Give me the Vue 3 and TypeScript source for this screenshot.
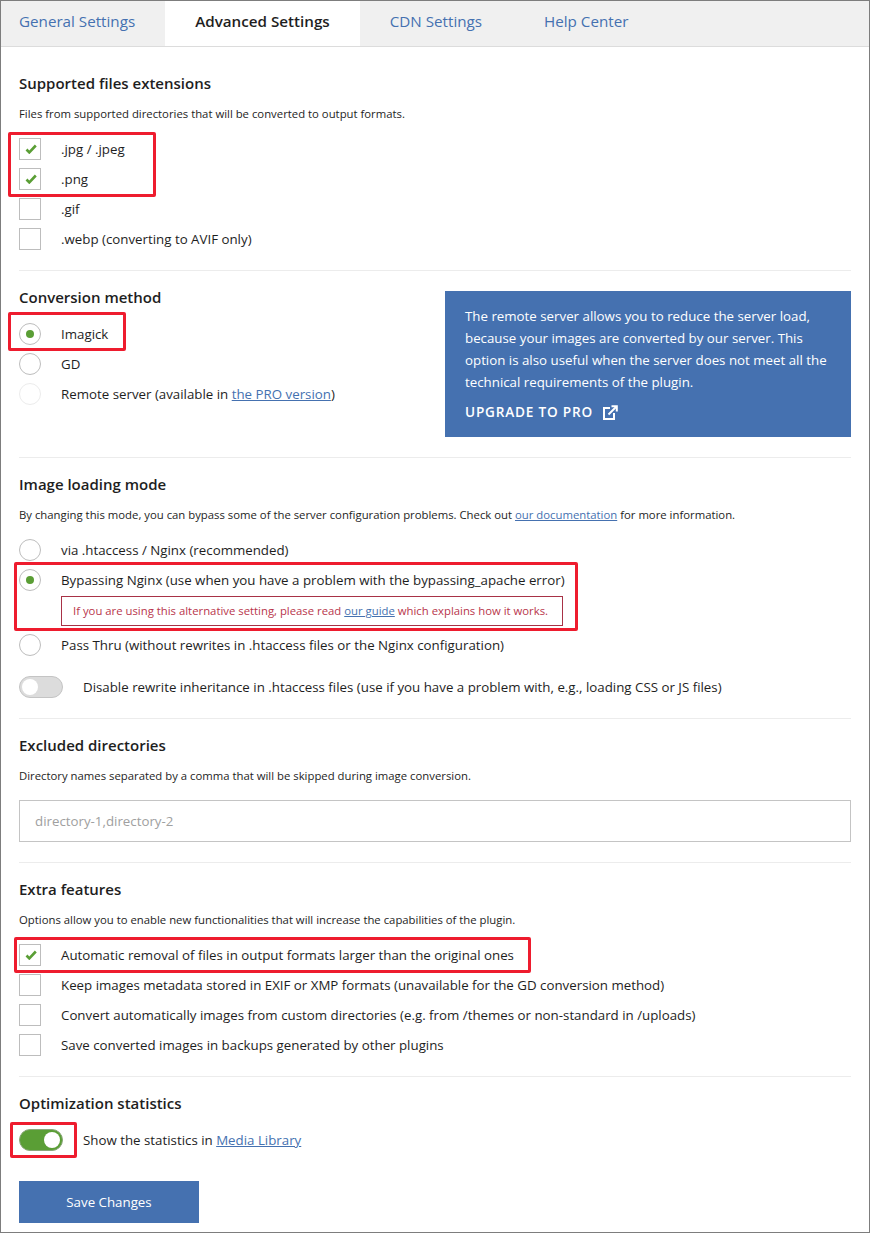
<script setup lang="ts">
const tabs = [
  { label: 'General Settings', active: false },
  { label: 'Advanced Settings', active: true },
  { label: 'CDN Settings', active: false },
  { label: 'Help Center', active: false },
]
const marks = [
  { x: 8, y: 132, w: 148, h: 65 },
  { x: 8, y: 312, w: 118, h: 39 },
  { x: 14, y: 562, w: 564, h: 69 },
  { x: 14, y: 937, w: 517, h: 36 },
  { x: 10, y: 1122, w: 67, h: 36 },
]
const px = (m: { x: number; y: number; w: number; h: number }) => ({
  left: m.x + 'px',
  top: m.y + 'px',
  width: m.w + 'px',
  height: m.h + 'px',
})
const extras = [
  { label: 'Automatic removal of files in output formats larger than the original ones', on: true },
  { label: 'Keep images metadata stored in EXIF or XMP formats (unavailable for the GD conversion method)', on: false },
  { label: 'Convert automatically images from custom directories (e.g. from /themes or non-standard in /uploads)', on: false },
  { label: 'Save converted images in backups generated by other plugins', on: false },
]
const exts = [
  { label: '.jpg / .jpeg', on: true },
  { label: '.png', on: true },
  { label: '.gif', on: false },
  { label: '.webp (converting to AVIF only)', on: false },
]
</script>

<template>
  <div class="page">
    <nav class="tabs">
      <a v-for="t in tabs" :key="t.label" class="tab" :class="{ active: t.active }">{{ t.label }}</a>
    </nav>

    <section class="sec first">
      <h3>Supported files extensions</h3>
      <p class="desc">Files from supported directories that will be converted to output formats.</p>
      <div class="rows">
        <div v-for="e in exts" :key="e.label" class="row">
          <span class="box">
            <svg v-if="e.on" width="12" height="10" viewBox="0 0 12 10"><path d="M1.5 5.5 4.3 8.4 10.8 1.5" fill="none" stroke="#5a9e35" stroke-width="2.6" /></svg>
          </span>
          <span>{{ e.label }}</span>
        </div>
      </div>
    </section>

    <section class="sec method">
      <div class="method-left">
        <h3>Conversion method</h3>
        <div class="rows">
          <div class="row"><span class="radio on"></span><span>Imagick</span></div>
          <div class="row"><span class="radio"></span><span>GD</span></div>
          <div class="row"><span class="radio off"></span><span>Remote server (available in <a class="lnk">the PRO version</a>)</span></div>
        </div>
      </div>
      <aside class="promo">
        <p>The remote server allows you to reduce the server load, because your images are converted by our server. This option is also useful when the server does not meet all the technical requirements of the plugin.</p>
        <a class="upgrade">UPGRADE TO PRO
          <svg width="16" height="15" viewBox="0 0 16 15" fill="none" stroke="#fff" stroke-width="2"><path d="M8 3H2v11h10V8" /><path d="M6.5 9.5 14 2" /><path d="M9.5 1.2h5.3v5.3" /></svg>
        </a>
      </aside>
    </section>

    <section class="sec">
      <h3>Image loading mode</h3>
      <p class="desc">By changing this mode, you can bypass some of the server configuration problems. Check out <a class="lnk">our documentation</a> for more information.</p>
      <div class="rows">
        <div class="row"><span class="radio"></span><span>via .htaccess / Nginx (recommended)</span></div>
        <div class="row"><span class="radio on"></span><span>Bypassing Nginx (use when you have a problem with the bypassing_apache error)</span></div>
      </div>
      <div class="warn">If you are using this alternative setting, please read <a class="lnk">our guide</a> which explains how it works.</div>
      <div class="row pass"><span class="radio"></span><span>Pass Thru (without rewrites in .htaccess files or the Nginx configuration)</span></div>
      <div class="row toggle-row">
        <span class="toggle"><i></i></span>
        <span>Disable rewrite inheritance in .htaccess files (use if you have a problem with, e.g., loading CSS or JS files)</span>
      </div>
    </section>

    <section class="sec">
      <h3>Excluded directories</h3>
      <p class="desc">Directory names separated by a comma that will be skipped during image conversion.</p>
      <div class="input">directory-1,directory-2</div>
    </section>

    <section class="sec">
      <h3>Extra features</h3>
      <p class="desc">Options allow you to enable new functionalities that will increase the capabilities of the plugin.</p>
      <div class="rows">
        <div v-for="e in extras" :key="e.label" class="row">
          <span class="box">
            <svg v-if="e.on" width="12" height="10" viewBox="0 0 12 10"><path d="M1.5 5.5 4.3 8.4 10.8 1.5" fill="none" stroke="#5a9e35" stroke-width="2.6" /></svg>
          </span>
          <span>{{ e.label }}</span>
        </div>
      </div>
    </section>

    <section class="sec last">
      <h3>Optimization statistics</h3>
      <div class="row toggle-row stat">
        <span class="toggle on"><i></i></span>
        <span>Show the statistics in <a class="lnk">Media Library</a></span>
      </div>
      <button class="save" type="button">Save Changes</button>
    </section>

    <div v-for="(m, i) in marks" :key="i" class="mark" :style="px(m)"></div>
  </div>
</template>

<style scoped>
.page {
  position: relative;
  box-sizing: border-box;
  width: 870px;
  height: 1233px;
  border: 1px solid #7d7d7d;
  background: #fff;
  color: #1e1e1e;
  font-family: "Open Sans", "Noto Sans", sans-serif;
  font-size: 13.3px;
  overflow: hidden;
}
.tabs {
  display: flex;
  height: 45px;
  background: #f0f0f0;
  border-bottom: 1px solid #dcdcdc;
}
.tab {
  padding: 0 30px;
  line-height: 41px;
  font-size: 15.2px;
  color: #4571b0;
  white-space: nowrap;
}
.tab:first-child { padding-left: 18px; }
.tab:nth-child(3) { padding-right: 32px; }
.tab.active {
  background: #fff;
  color: #1e1e1e;
  font-weight: 600;
  height: 45px;
}
.sec {
  margin: 0 18px;
  padding: 17px 0 20px;
  border-bottom: 1px solid #ececec;
}
.sec.first { padding-top: 27px; }
.sec.last { border-bottom: 0; }
h3 {
  margin: -1px 0 0;
  font-size: 15px;
  line-height: 20px;
  font-weight: 600;
  color: #1e1e1e;
}
.desc {
  margin: 12px 0 15px;
  font-size: 11.33px;
  line-height: 18px;
}
.rows {
  display: flex;
  flex-direction: column;
  gap: 8px;
}
.method-left .rows { margin-top: 16px; }
.row {
  display: flex;
  align-items: center;
  min-height: 22px;
  line-height: 22px;
  white-space: nowrap;
}
.box, .radio {
  box-sizing: border-box;
  flex: none;
  width: 22px;
  height: 22px;
  margin-right: 20px;
  border: 1px solid #bdbdbd;
  background: #fff;
  display: flex;
  align-items: center;
  justify-content: center;
}
.box svg { margin-left: 2px; }
.radio { border-radius: 50%; }
.radio.off { border-color: #ececec; }
.radio.on::after {
  content: "";
  width: 8px;
  height: 8px;
  border-radius: 50%;
  background: #5a9e35;
}
.lnk {
  color: #4571b0;
  text-decoration: underline;
}
.method {
  display: flex;
  justify-content: space-between;
  align-items: flex-start;
}
.promo {
  box-sizing: border-box;
  width: 406px;
  height: 146px;
  margin-top: 3px;
  padding: 14px 20px;
  background: #4571b0;
  color: #fff;
}
.promo p {
  margin: 0;
  line-height: 22px;
}
.upgrade {
  display: flex;
  align-items: center;
  gap: 9px;
  margin-top: 10px;
  font-weight: 600;
  font-size: 13.6px;
  line-height: 18px;
  letter-spacing: 0.8px;
}
.warn {
  box-sizing: border-box;
  width: 502px;
  height: 30px;
  margin: 5px 0 8px 42px;
  padding: 0 11px;
  line-height: 28px;
  border: 1px solid #a83246;
  font-size: 11.33px;
  color: #b8354b;
  white-space: nowrap;
}
.toggle-row { margin-top: 20px; }
.toggle-row.stat { margin-top: 16px; }
.toggle {
  box-sizing: border-box;
  flex: none;
  position: relative;
  width: 44px;
  height: 22px;
  margin-right: 20px;
  border-radius: 11px;
  border: 1px solid #c4c4c4;
  background: #dcdcdc;
}
.toggle i {
  position: absolute;
  left: 2px;
  top: 2px;
  width: 16px;
  height: 16px;
  border-radius: 50%;
  background: #fff;
}
.toggle.on {
  background: #5a9e35;
  border-color: #8aa67a;
}
.toggle.on i {
  left: auto;
  right: 2px;
}
.input {
  box-sizing: border-box;
  height: 42px;
  padding: 0 15px;
  line-height: 40px;
  border: 1px solid #c4c4c4;
  color: #a0a0a0;
}
.save {
  display: block;
  width: 180px;
  height: 42px;
  margin-top: 30px;
  border: 0;
  background: #4571b0;
  color: #fff;
  font: inherit;
}
.mark {
  position: absolute;
  box-sizing: border-box;
  margin: -1px 0 0 -1px;
  border: 3px solid #ee1c2e;
  border-radius: 2px;
}
</style>

<style>
html, body { margin: 0; background: #fff; }
</style>
